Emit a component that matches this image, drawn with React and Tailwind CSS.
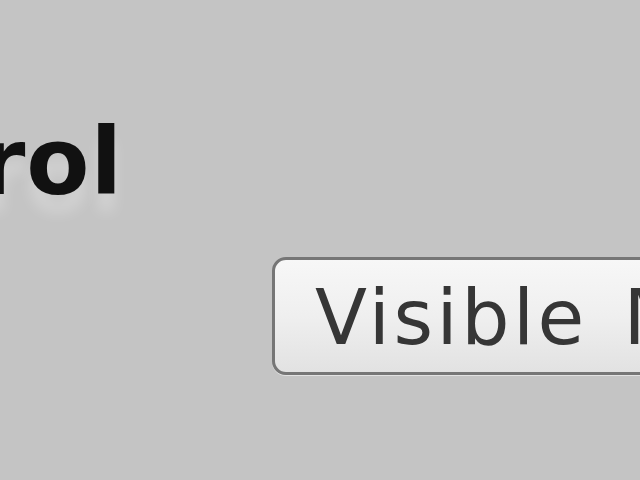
export default function App() {
  return (
    <div className="w-[640px] h-[480px] bg-[#c4c4c4] overflow-hidden flex flex-col pt-[117px]">
      <div
        className="ml-[-20px] text-[92px] leading-none font-bold text-[#111111] tracking-[1px] [text-shadow:0_18px_14px_rgba(255,255,255,0.25)]"
        style={{ fontFamily: '"DejaVu Sans", sans-serif' }}
      >
        rol
      </div>
      <div className="flex mt-[48px] ml-[272px]">
        <div
          className="shrink-0 w-[460px] h-[118px] rounded-[14px] border-[3px] border-[#767676] bg-gradient-to-b from-[#f7f7f7] via-[#efefef] to-[#e2e2e2] pl-[40px] pt-[20px] text-[76px] leading-none text-[#363636] tracking-[3.5px] [word-spacing:8px] whitespace-nowrap shadow-[0_1px_0_rgba(255,255,255,0.5)]"
          style={{ fontFamily: '"DejaVu Sans", sans-serif' }}
        >
          Visible Mode
        </div>
      </div>
    </div>
  );
}
